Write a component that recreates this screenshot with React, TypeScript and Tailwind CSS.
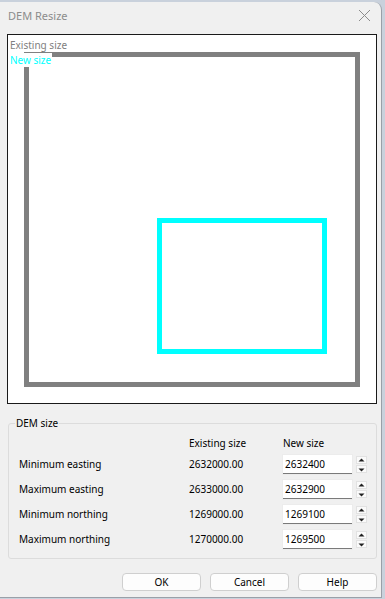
import React from "react";

function Spinner() {
  return (
    <div className="flex flex-col ml-[4px] gap-[1px]">
      <div className="w-[11px] h-[8px] bg-[#fafafa] border border-[#e2e2e2] flex items-center justify-center">
        <svg width="7" height="5" viewBox="0 0 7 5"><path d="M3.5 0.5 L6.5 3.5 L0.5 3.5 Z" fill="#202020" /></svg>
      </div>
      <div className="w-[11px] h-[8px] bg-[#fafafa] border border-[#e2e2e2] flex items-center justify-center">
        <svg width="7" height="5" viewBox="0 0 7 5"><path d="M0.5 1.5 L6.5 1.5 L3.5 4.5 Z" fill="#202020" /></svg>
      </div>
    </div>
  );
}

const rows = [
  ["Minimum easting", "2632000.00", "2632400"],
  ["Maximum easting", "2633000.00", "2632900"],
  ["Minimum northing", "1269000.00", "1269100"],
  ["Maximum northing", "1270000.00", "1269500"],
];

export default function App() {
  return (
    <div
      className="w-[385px] h-[599px] bg-[#c9d1dc] overflow-hidden pt-[2px]"
      style={{ fontFamily: '"Noto Sans", "Open Sans", sans-serif' }}
    >
      <div className="w-[382px] h-[596px] bg-[#f0f0f0] rounded-tr-[8px] border-r border-b border-[#9aa0a8] flex flex-col">
        {/* title bar */}
        <div className="h-[32px] flex items-center justify-between pl-[8px] pr-[10px]">
          <span className="text-[11px] text-[#8c8c8c] leading-none -mt-[5px]">DEM Resize</span>
          <svg width="13" height="13" viewBox="0 0 13 13" className="-mt-[5px]">
            <path d="M1 1 L12 12 M12 1 L1 12" stroke="#8c8c8c" strokeWidth="1" />
          </svg>
        </div>
        {/* preview canvas */}
        <div className="ml-[7px] w-[370px] h-[370px] bg-white border border-[#1a1a1a] relative">
          <div className="absolute left-[16px] top-[17px] w-[336px] h-[335px] border-[5px] border-[#808080]" />
          <div className="absolute left-[149px] top-[183px] w-[170px] h-[136px] border-[5px] border-[#00ffff]" />
          <div className="absolute left-[2px] top-[3px] text-[10px] leading-[14px] text-[#808080] bg-white pr-[1px]">Existing size</div>
          <div className="absolute left-[2px] top-[18px] text-[10px] leading-[14px] text-[#00ffff] bg-white pr-[1px]">New size</div>
        </div>
        {/* group box */}
        <div className="ml-[8px] mt-[19px] w-[369px] h-[136px] border border-[#dcdcdc] rounded-[3px] relative pl-[10px] pt-[10px]">
          <div className="absolute left-[6px] -top-[8px] px-[1px] bg-[#f0f0f0] text-[10px] leading-[14px] text-black">DEM size</div>
          <div className="grid grid-cols-[170px_94px_auto] text-[10px] text-black">
            <div className="h-[18px]" />
            <div className="h-[18px] flex items-center">Existing size</div>
            <div className="h-[18px] flex items-center">New size</div>
            {rows.map((r) => (
              <React.Fragment key={r[0]}>
                <div className="h-[25px] flex items-center">{r[0]}</div>
                <div className="h-[25px] flex items-center">{r[1]}</div>
                <div className="h-[25px] flex items-center">
                  <div className="w-[69px] h-[19px] bg-white border-b border-[#7a7a7a] flex items-center pl-[2px] shadow-[0_0_0_1px_#ececec]">
                    {r[2]}
                  </div>
                  <Spinner />
                </div>
              </React.Fragment>
            ))}
          </div>
        </div>
        {/* buttons */}
        <div className="mt-[14px] flex justify-end gap-[9px] pr-[4px]">
          {["OK", "Cancel", "Help"].map((b) => (
            <div
              key={b}
              className="w-[79px] h-[18px] bg-[#fdfdfd] border border-[#cfcfcf] rounded-[4px] flex items-center justify-center text-[10px] text-black"
            >
              {b}
            </div>
          ))}
        </div>
      </div>
    </div>
  );
}
